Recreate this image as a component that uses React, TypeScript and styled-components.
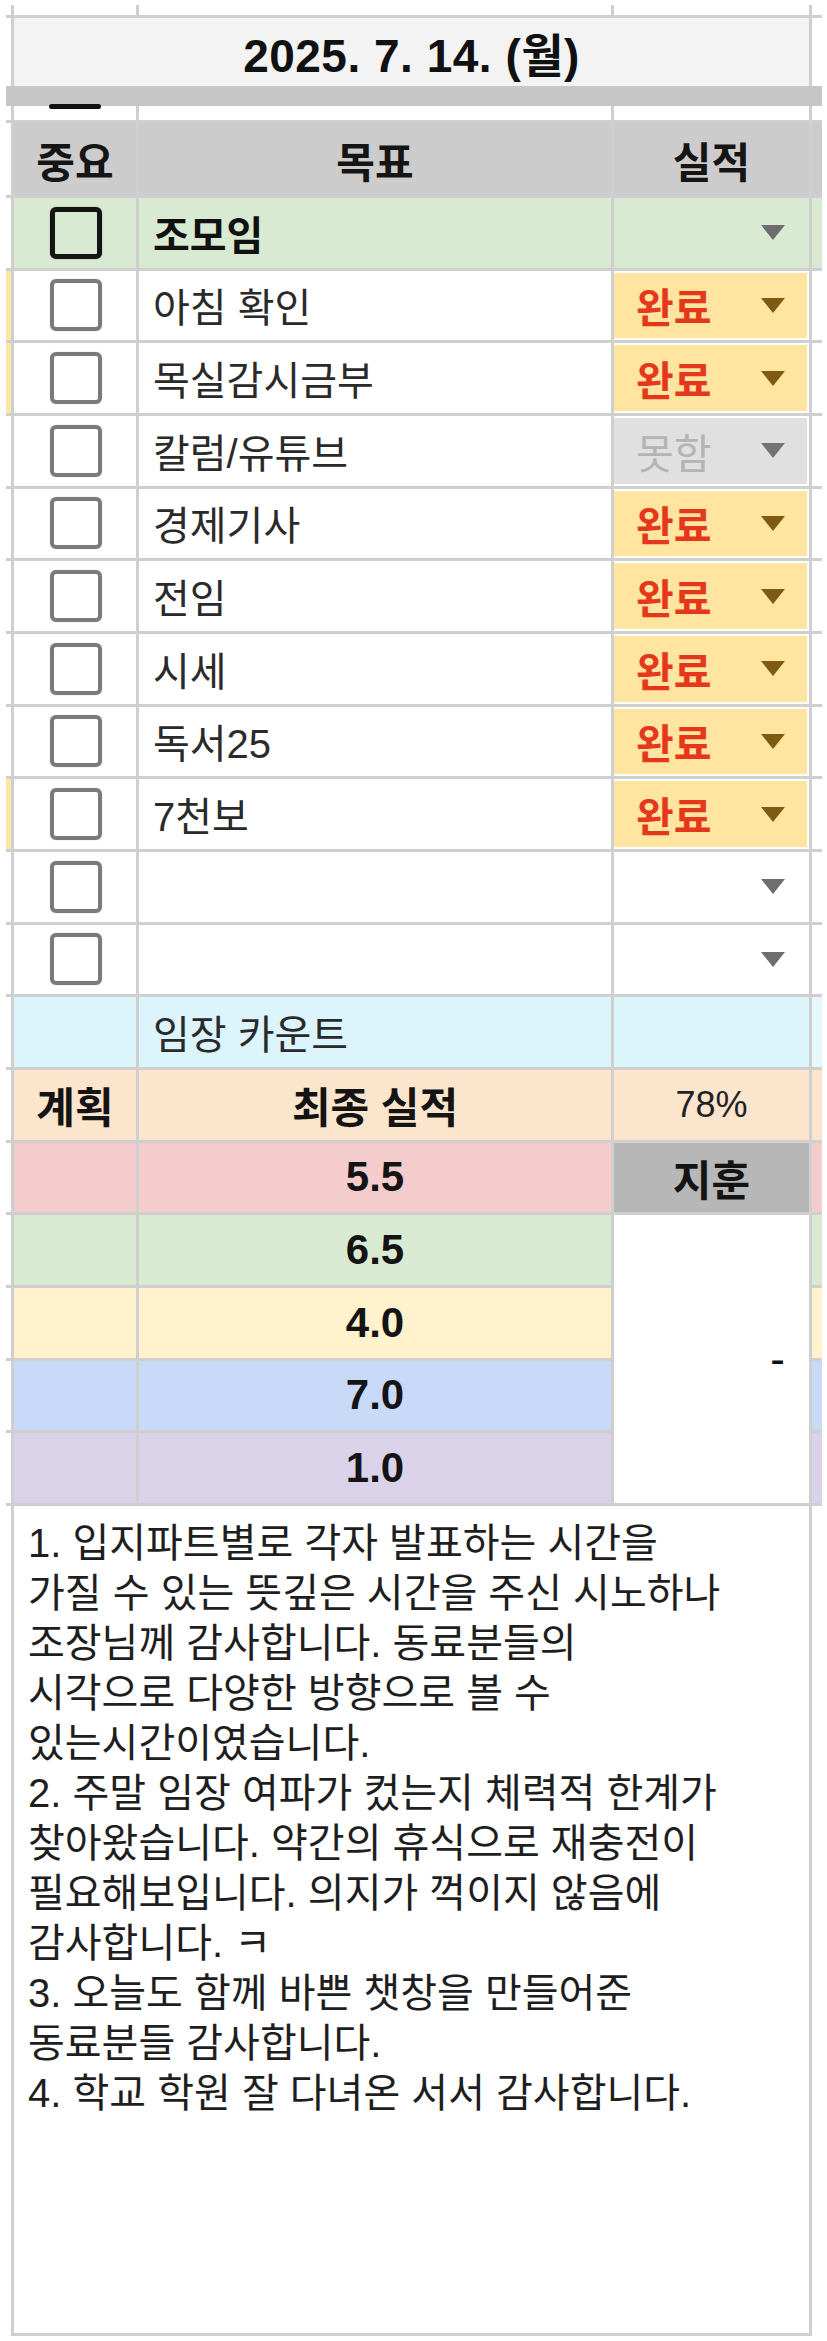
import React from 'react';
import styled, { createGlobalStyle } from 'styled-components';

const LINE = '#cfcfcf';
const FONT = `"Liberation Sans", "Noto Sans CJK KR", sans-serif`;

type Status = 'done' | 'miss' | 'none';

interface Goal {
  label: string;
  status: Status;
  bold?: boolean;
  bg?: string;
  edge?: string;
}

const goals: Goal[] = [
  { label: '조모임', status: 'none', bold: true, bg: '#d9ead3' },
  { label: '아침 확인', status: 'done', edge: '#ffe7a6' },
  { label: '목실감시금부', status: 'done', edge: '#ffe7a6' },
  { label: '칼럼/유튜브', status: 'miss' },
  { label: '경제기사', status: 'done' },
  { label: '전임', status: 'done' },
  { label: '시세', status: 'done' },
  { label: '독서25', status: 'done' },
  { label: '7천보', status: 'done', edge: '#ffe7a6' },
  { label: '', status: 'none' },
  { label: '', status: 'none' },
];

const scores = [
  { value: '5.5', bg: '#f4cccc' },
  { value: '6.5', bg: '#d9ead3' },
  { value: '4.0', bg: '#fff2cc' },
  { value: '7.0', bg: '#c9daf8' },
  { value: '1.0', bg: '#d9d2e9' },
];

const notes = [
  '1. 입지파트별로 각자 발표하는 시간을',
  '가질 수 있는 뜻깊은 시간을 주신 시노하나',
  '조장님께 감사합니다. 동료분들의',
  '시각으로 다양한 방향으로 볼 수',
  '있는시간이였습니다.',
  '2. 주말 임장 여파가 컸는지 체력적 한계가',
  '찾아왔습니다. 약간의 휴식으로 재충전이',
  '필요해보입니다. 의지가 꺽이지 않음에',
  '감사합니다. ㅋ',
  '3. 오늘도 함께 바쁜 챗창을 만들어준',
  '동료분들 감사합니다.',
  '4. 학교 학원 잘 다녀온 서서 감사합니다.',
];

const GlobalStyle = createGlobalStyle`
  html, body {
    margin: 0;
    padding: 0;
    background: #ffffff;
  }
  body {
    font-family: ${FONT};
    color: #222222;
  }
`;

const App: React.FC = () => {
  return (
    <Page>
      <GlobalStyle />
      <Sheet>
        {/* tail of the row above */}
        <Blank />
        <Blank />
        <Blank />
        <Blank />
        <Blank />

        <Sliver />
        <DateCell>2025. 7. 14. (월)</DateCell>
        <Sliver />

        <FreezeBar />

        <Sliver />
        <Cell>
          <Dash />
        </Cell>
        <Cell />
        <Cell />
        <Sliver />

        <Sliver />
        <HeadCell>중요</HeadCell>
        <HeadCell>목표</HeadCell>
        <HeadCell>실적</HeadCell>
        <Sliver $bg="#cccccc" />

        {goals.map((g, i) => (
          <React.Fragment key={i}>
            <Sliver $bg={g.edge} />
            <CheckCell $bg={g.bg}>
              <CheckBox $strong={g.bold} />
            </CheckCell>
            <GoalCell $bg={g.bg} $bold={g.bold}>
              {g.label}
            </GoalCell>
            <StatusCell $bg={g.bg}>
              {g.status === 'none' ? (
                <Arrow $color="#6e6e6e" />
              ) : (
                <Chip $tone={g.status}>
                  <span>{g.status === 'done' ? '완료' : '못함'}</span>
                  <Arrow $color={g.status === 'done' ? '#7d5b12' : '#737373'} />
                </Chip>
              )}
            </StatusCell>
            <Sliver $bg={g.bg} />
          </React.Fragment>
        ))}

        <Sliver />
        <Cell $bg="#dcf5fd" />
        <GoalCell $bg="#dcf5fd">임장 카운트</GoalCell>
        <Cell $bg="#dcf5fd" />
        <Sliver $bg="#e6f8fd" />

        <Sliver />
        <SummaryCell $bg="#fce5cd" $bold>
          계획
        </SummaryCell>
        <SummaryCell $bg="#fce5cd" $bold>
          최종 실적
        </SummaryCell>
        <SummaryCell $bg="#fce5cd" $size={36}>
          78%
        </SummaryCell>
        <Sliver $bg="#fce5cd" />

        {scores.map((s, i) => (
          <React.Fragment key={s.value}>
            <Sliver />
            <Cell $bg={s.bg} />
            <ScoreCell $bg={s.bg}>{s.value}</ScoreCell>
            {i === 0 && <SummaryCell $bg="#b7b7b7" $bold>지훈</SummaryCell>}
            {i === 1 && <MergedCell>-</MergedCell>}
            <Sliver $bg={s.bg} />
          </React.Fragment>
        ))}

        <Sliver />
        <NoteCell>
          {notes.map((line, i) => (
            <NoteLine key={i}>{line}</NoteLine>
          ))}
        </NoteCell>
        <Sliver />
      </Sheet>
    </Page>
  );
};

const Page = styled.div`
  padding: 5px 0 0 6px;
`;

const Sheet = styled.div`
  display: grid;
  width: max-content;
  grid-template-columns: 5px 122px 472px 195px 10px;
  grid-template-rows: 10px 68px 14px 14px 72px repeat(18, 69.67px) 830px;
  gap: 3px;
  background: ${LINE};
`;

const Cell = styled.div<{ $bg?: string }>`
  display: flex;
  align-items: center;
  min-width: 0;
  background: ${(p) => p.$bg || '#ffffff'};
`;

const Blank = styled.div`
  background: #ffffff;
`;

const Sliver = styled.div<{ $bg?: string }>`
  background: ${(p) => p.$bg || '#ffffff'};
`;

const DateCell = styled(Cell)`
  grid-column: span 3;
  justify-content: center;
  background: #f3f3f3;
  font-size: 46px;
  font-weight: 700;
  color: #111111;
  letter-spacing: 0.5px;
`;

const FreezeBar = styled.div`
  grid-column: 1 / -1;
  background: #c6c6c6;
  margin: -3px 0;
`;

const Dash = styled.span`
  display: block;
  width: 52px;
  height: 5px;
  margin: -14px auto 0;
  border-radius: 3px;
  background: #111111;
`;

const HeadCell = styled(Cell)`
  justify-content: center;
  background: #cccccc;
  font-size: 42px;
  font-weight: 700;
  color: #151515;
`;

const CheckCell = styled(Cell)`
  justify-content: center;
`;

const CheckBox = styled.span<{ $strong?: boolean }>`
  display: block;
  box-sizing: border-box;
  width: 52px;
  height: 52px;
  margin-left: 2px;
  border-radius: 6px;
  border: ${(p) => (p.$strong ? '5px solid #141414' : '4px solid #7a7a7a')};
  box-shadow: 0 0 1px ${(p) => (p.$strong ? '#333333' : '#9a9a9a')};
`;

const GoalCell = styled(Cell)<{ $bold?: boolean }>`
  padding-left: 14px;
  font-size: 40px;
  font-weight: ${(p) => (p.$bold ? 700 : 400)};
  color: ${(p) => (p.$bold ? '#111111' : '#2a2a2a')};
  white-space: nowrap;
`;

const StatusCell = styled(Cell)`
  justify-content: flex-end;
  align-items: stretch;
  padding-right: 24px;

  & > span:only-child {
    align-self: center;
  }
`;

const Chip = styled.div<{ $tone: Status }>`
  flex: 1;
  display: flex;
  align-items: center;
  justify-content: space-between;
  margin: 2px -22px 2px 0;
  padding: 0 22px 0 22px;
  background: ${(p) => (p.$tone === 'done' ? '#ffe5a0' : '#e0e0e0')};
  font-size: 41px;
  font-weight: ${(p) => (p.$tone === 'done' ? 700 : 400)};
  color: ${(p) => (p.$tone === 'done' ? '#e4371c' : '#b4b4b4')};
`;

const Arrow = styled.span<{ $color: string }>`
  display: block;
  align-self: center;
  width: 0;
  height: 0;
  border-left: 12px solid transparent;
  border-right: 12px solid transparent;
  border-top: 15px solid ${(p) => p.$color};
`;

const SummaryCell = styled(Cell)<{ $bold?: boolean; $size?: number }>`
  justify-content: center;
  font-size: ${(p) => p.$size || 42}px;
  font-weight: ${(p) => (p.$bold ? 700 : 400)};
  color: ${(p) => (p.$bold ? '#141414' : '#222222')};
`;

const ScoreCell = styled(Cell)`
  justify-content: center;
  font-size: 42px;
  font-weight: 700;
  color: #141414;
`;

const MergedCell = styled(Cell)`
  grid-row: span 4;
  justify-content: flex-end;
  padding-right: 24px;
  font-size: 44px;
  color: #111111;
`;

const NoteCell = styled.div`
  grid-column: span 3;
  background: #ffffff;
  border-bottom: 3px solid ${LINE};
  padding: 12px 14px 0;
  font-size: 40px;
  line-height: 50px;
  color: #1e1e1e;
`;

const NoteLine = styled.div`
  white-space: nowrap;
`;

export default App;
